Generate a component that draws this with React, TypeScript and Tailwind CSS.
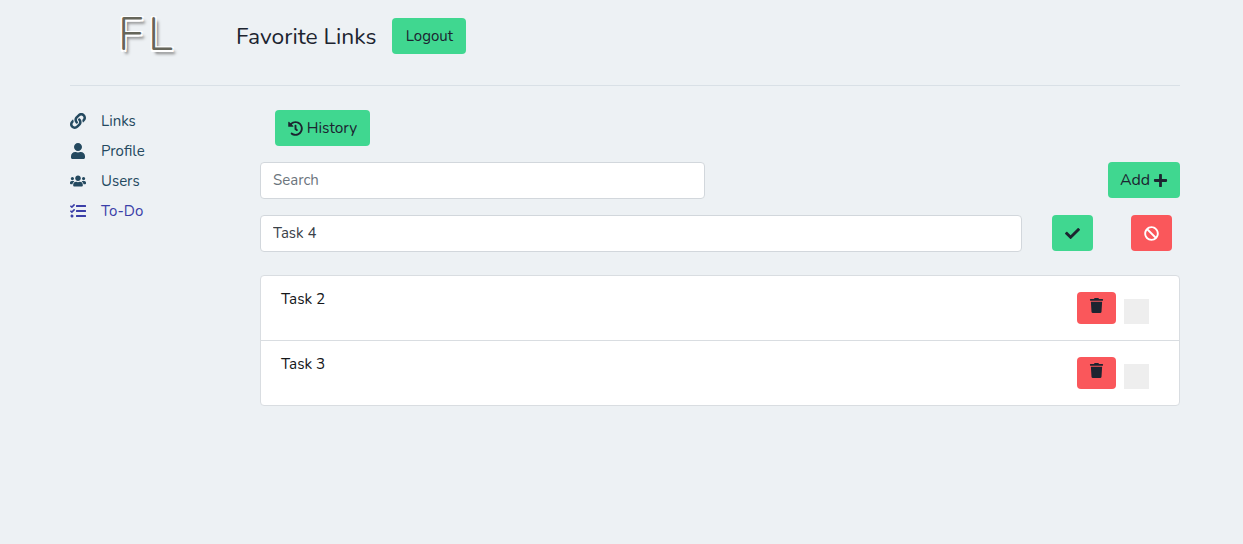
import { FaLink, FaUser, FaUsers, FaTasks, FaHistory, FaPlus, FaCheck, FaBan, FaTrash } from "react-icons/fa";

const navItems = [
  { label: "Links", icon: FaLink, active: false },
  { label: "Profile", icon: FaUser, active: false },
  { label: "Users", icon: FaUsers, active: false },
  { label: "To-Do", icon: FaTasks, active: true },
];

const tasks = ["Task 2", "Task 3"];

function TaskRow({ name, last }: { name: string; last: boolean }) {
  return (
    <div className={`flex justify-between pl-5 pr-[30px] ${last ? "h-[64px]" : "h-[65px] border-b border-[#d9dde1]"}`}>
      <span className="mt-[11px] text-[15.3px] leading-6 text-[#15171a]">{name}</span>
      <div className="mt-4 flex items-start gap-2">
        <button className="flex h-8 w-[39px] justify-center rounded bg-[#fa575b] pt-[6px] text-[#1c2430]">
          <FaTrash size={15} />
        </button>
        <div className="mt-[7px] h-[25px] w-[25px] bg-[#eeeeee]" />
      </div>
    </div>
  );
}

export default function App() {
  return (
    <div className="min-h-[544px] bg-[#edf1f4] px-[70px] pr-[63px] font-['Nunito','Noto_Sans',sans-serif] text-base text-[#1c2430]">
      <header className="flex h-[86px] items-start border-b border-[#d9e0e6]">
        <div className="mt-[5px] ml-[48px] w-[118px] text-[46px] leading-[60px] font-light tracking-[5px] text-[#66665a] [text-shadow:1.5px_1.5px_0_#fff,-1.5px_-1.5px_0_#fff,1.5px_-1.5px_0_#fff,-1.5px_1.5px_0_#fff,3px_4px_3px_#7f7f7f]">
          FL
        </div>
        <h1 className="mt-[19px] text-[22.8px] leading-9 text-[#1c2430]">Favorite Links</h1>
        <button className="mt-[18px] ml-4 h-9 w-[74px] rounded bg-[#40d790] text-[15px]">Logout</button>
      </header>

      <div className="flex">
        <nav className="mt-5 w-[190px] shrink-0">
          {navItems.map((item) => (
            <div
              key={item.label}
              className={`flex h-[30px] items-center gap-[15px] text-[15px] ${item.active ? "text-[#3b3fa8]" : "text-[#24495f]"}`}
            >
              <span className="flex w-4 justify-center">
                <item.icon size={16} />
              </span>
              {item.label}
            </div>
          ))}
        </nav>

        <main className="flex-1">
          <button className="mt-6 ml-[15px] flex h-9 w-[95px] items-center justify-center gap-1 rounded bg-[#40d790] text-[15.4px]">
            <FaHistory size={15} />
            History
          </button>

          <div className="mt-4 flex items-start justify-between">
            <input
              readOnly
              placeholder="Search"
              className="h-[37px] w-[445px] rounded border border-[#d2d7dc] bg-white px-3 pb-[2px] text-[15px] outline-none placeholder:text-[#6c757d]"
            />
            <button className="flex h-9 w-[72px] items-center justify-center gap-[3px] rounded bg-[#40d790] text-base">
              Add
              <FaPlus size={15} />
            </button>
          </div>

          <div className="mt-4 flex items-start">
            <input
              readOnly
              value="Task 4"
              className="h-[37px] w-[762px] rounded border border-[#d2d7dc] bg-white px-3 pb-[2px] text-[15px] text-[#3a4148] outline-none"
            />
            <button className="ml-[30px] flex h-9 w-[41px] items-center justify-center rounded bg-[#40d790]">
              <FaCheck size={15} />
            </button>
            <button className="ml-[38px] flex h-9 w-[41px] items-center justify-center rounded bg-[#fa575b] text-white">
              <FaBan size={15} />
            </button>
          </div>

          <div className="mt-[23px] overflow-hidden rounded border border-[#d9dde1] bg-white">
            {tasks.map((task, i) => (
              <TaskRow key={task} name={task} last={i === tasks.length - 1} />
            ))}
          </div>
        </main>
      </div>
    </div>
  );
}
